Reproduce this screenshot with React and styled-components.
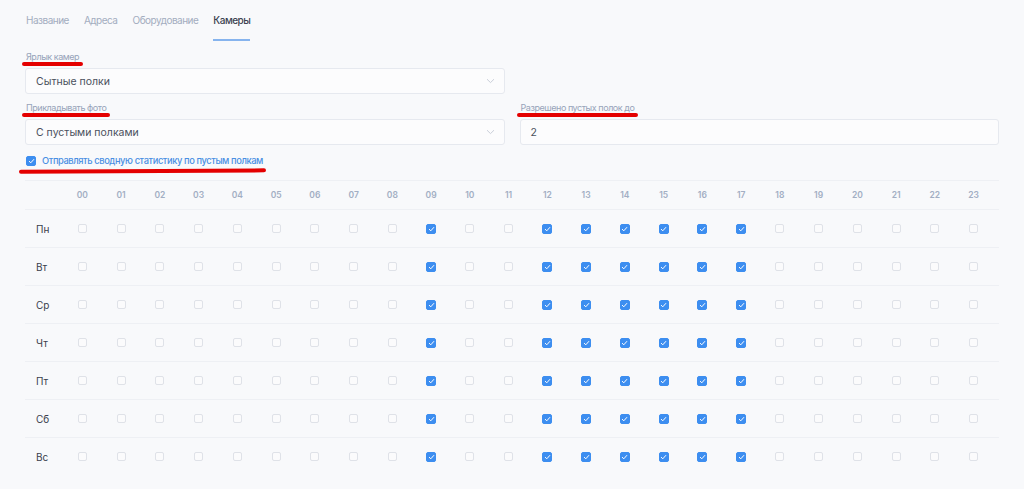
import React from 'react';
import styled, {createGlobalStyle} from 'styled-components';

const GlobalStyle = createGlobalStyle`
  html, body {
    margin: 0;
    padding: 0;
    background: #f8f9fb;
  }
  body {
    font-family: Inter, "Noto Sans", sans-serif;
    -webkit-font-smoothing: antialiased;
  }
`;

const Page = styled.div`
  width: 1024px;
  min-height: 489px;
  box-sizing: border-box;
  padding: 11px 25px 0 25px;
  background: #f8f9fb;
`;

const Tabs = styled.div`
  display: flex;
  gap: 15px;
  margin-left: 1px;
`;

const Tab = styled.div`
  font-size: 10px;
  letter-spacing: -0.5px;
  line-height: 18px;
  padding-bottom: 10px;
  color: ${p => p.$active ? '#3b4250' : '#a3adbf'};
  font-weight: ${p => p.$active ? 500 : 400};
  border-bottom: 2px solid ${p => p.$active ? '#86b4ee' : 'transparent'};
`;

const Fields = styled.div`
  display: grid;
  grid-template-columns: 1fr 1fr;
  column-gap: 15px;
  row-gap: 7px;
  margin-top: 9px;
`;

const Field = styled.div`
  display: flex;
  flex-direction: column;
  align-items: flex-start;
`;

const Label = styled.label`
  position: relative;
  font-size: 9px;
  letter-spacing: -0.45px;
  line-height: 14px;
  color: #97a3b9;
  margin: 0 0 4px 1px;

  &::after{
    content: '';
    position: absolute;
    left: -4px;
    right: -4px;
    bottom: -2px;
    height: 4px;
    border-radius: 2px;
    background: #e40000;
  }
`;

const Box = styled.div`
  align-self: stretch;
  height: 26px;
  box-sizing: border-box;
  border: 1px solid #e6e9ef;
  border-radius: 3px;
  background: #fcfcfd;
  display: flex;
  align-items: center;
  justify-content: space-between;
  padding: 0 9px 0 10px;
  font-size: 10.5px;
  color: #4a505c;
`;

const Chevron = () => (
    <svg width="9" height="6" viewBox="0 0 9 6">
        <path d="M1 1.2 L4.5 4.6 L8 1.2" fill="none" stroke="#c4cad5" strokeWidth="0.9"/>
    </svg>
);

const CheckRow = styled.div`
  position: relative;
  display: inline-flex;
  align-items: center;
  gap: 6px;
  margin: 9px 0 0 1px;
  line-height: 14px;

  &::after{
    content: '';
    position: absolute;
    left: -7px;
    right: -3px;
    bottom: -5px;
    height: 4px;
    border-radius: 2px;
    background: #e40000;
    transform: rotate(-0.3deg);
  }
`;

const CheckText = styled.span`
  font-size: 9.3px;
  letter-spacing: -0.4px;
  font-weight: 500;
  color: #4a8fe3;
`;

const Check = styled.span`
  flex: none;
  width: ${p => p.$size || 9}px;
  height: ${p => p.$size || 9}px;
  box-sizing: border-box;
  border-radius: 2px;
  border: 1px solid ${p => p.$on ? '#3d8ef0' : '#dfe2e8'};
  background: ${p => p.$on ? '#3d8ef0' : '#fbfbfc'};
  display: flex;
  align-items: center;
  justify-content: center;
`;

const Tick = () => (
    <svg width="7" height="6" viewBox="0 0 7 6">
        <path d="M1 3.1 L2.8 4.8 L6 1.2" fill="none" stroke="#fff" strokeWidth="1"/>
    </svg>
);

const Table = styled.div`
  margin-top: 12px;
  border-top: 1px solid #eef0f4;
`;

const Row = styled.div`
  display: grid;
  grid-template-columns: 38px repeat(24, 1fr);
  padding-right: 6px;
  height: ${p => p.$head ? 29 : 38}px;
  align-items: center;
  border-bottom: 1px solid ${p => p.$last ? 'transparent' : '#eef0f4'};
  box-sizing: border-box;
`;

const Hour = styled.div`
  text-align: center;
  font-size: 8.5px;
  font-weight: 600;
  color: #a2aec3;
`;

const Day = styled.div`
  font-size: 10px;
  color: #3a404c;
  padding-left: 11px;
`;

const Cell = styled.div`
  display: flex;
  justify-content: center;
`;

const hours = Array.from({length: 24}, (_, i) => String(i).padStart(2, '0'));
const days = ['Пн', 'Вт', 'Ср', 'Чт', 'Пт', 'Сб', 'Вс'];
const active = [9, 12, 13, 14, 15, 16, 17];

function App(){
    return <Page>
        <GlobalStyle/>
        <Tabs>
            <Tab>Название</Tab>
            <Tab>Адреса</Tab>
            <Tab>Оборудование</Tab>
            <Tab $active>Камеры</Tab>
        </Tabs>
        <Fields>
            <Field>
                <Label>Ярлык камер</Label>
                <Box>Сытные полки<Chevron/></Box>
            </Field>
            <div/>
            <Field>
                <Label>Прикладывать фото</Label>
                <Box>С пустыми полками<Chevron/></Box>
            </Field>
            <Field>
                <Label>Разрешено пустых полок до</Label>
                <Box>2</Box>
            </Field>
        </Fields>
        <CheckRow>
            <Check $on $size={10}><Tick/></Check>
            <CheckText>Отправлять сводную статистику по пустым полкам</CheckText>
        </CheckRow>
        <Table>
            <Row $head>
                <div/>
                {hours.map(h => <Hour key={h}>{h}</Hour>)}
            </Row>
            {days.map((d, i) => (
                <Row key={d} $last={i === days.length - 1}>
                    <Day>{d}</Day>
                    {hours.map((h, j) => {
                        const on = active.includes(j);
                        return <Cell key={h}>
                            <Check $on={on} $size={on ? 10 : 9}>{on && <Tick/>}</Check>
                        </Cell>;
                    })}
                </Row>
            ))}
        </Table>
    </Page>;
}

export default App;
